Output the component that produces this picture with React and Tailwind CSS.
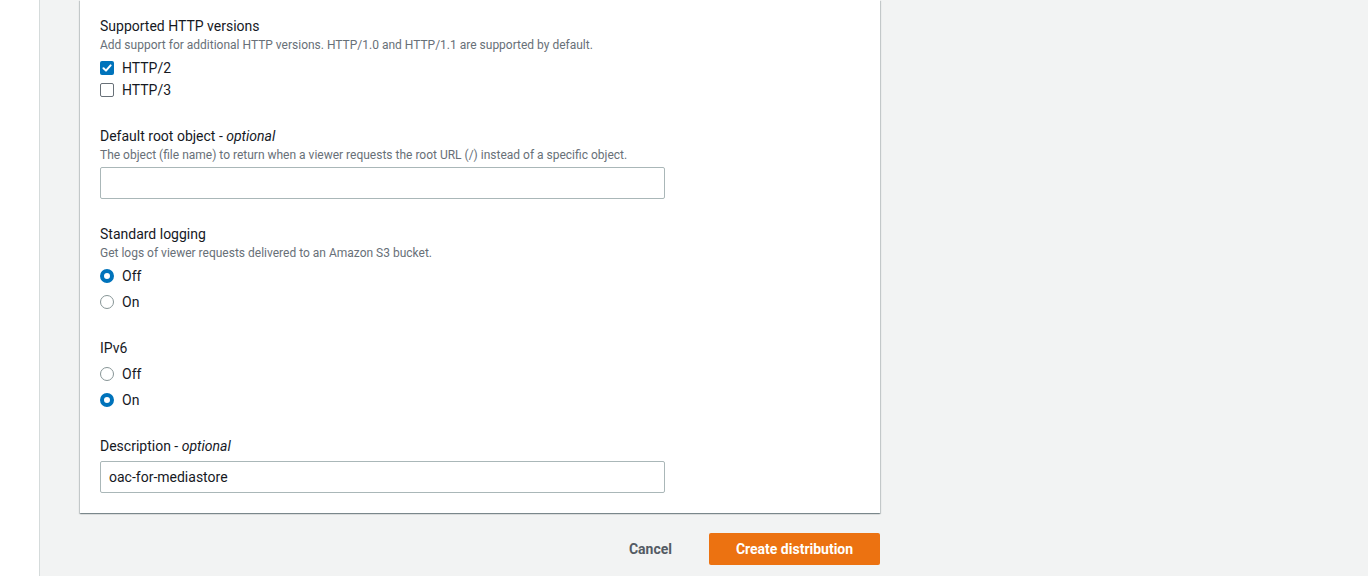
import React from "react";

const font = { fontFamily: "Roboto, 'Liberation Sans', Arial, sans-serif" };

function Checkbox({ checked, label }) {
  return (
    <label className="flex h-[22px] items-center gap-2 text-sm text-[#16191f]">
      {checked ? (
        <span className="flex h-[14px] w-[14px] items-center justify-center rounded-[2px] bg-[#0073bb]">
          <svg width="10" height="10" viewBox="0 0 10 10" fill="none">
            <path d="M1.5 5.2 L4 7.6 L8.6 2.4" stroke="white" strokeWidth="2" strokeLinecap="round" strokeLinejoin="round" />
          </svg>
        </span>
      ) : (
        <span className="h-[14px] w-[14px] rounded-[2px] border border-[#687078] bg-white" />
      )}
      <span className="leading-[22px]">{label}</span>
    </label>
  );
}

function Radio({ checked, label }) {
  return (
    <label className="flex h-[26px] items-center gap-2 text-sm text-[#16191f]">
      {checked ? (
        <span className="h-[14px] w-[14px] rounded-full border-[4px] border-[#0073bb] bg-white" />
      ) : (
        <span className="h-[14px] w-[14px] rounded-full border border-[#879596] bg-white" />
      )}
      <span className="leading-[22px]">{label}</span>
    </label>
  );
}

function Label({ children }) {
  return <div className="text-sm leading-[22px] text-[#16191f]">{children}</div>;
}

function Desc({ children }) {
  return <div className="text-xs leading-4 text-[#687078]">{children}</div>;
}

function Input({ value }) {
  return (
    <div className="mt-1 flex h-8 w-[565px] items-center rounded-[2px] border border-[#aab7b8] bg-white px-2 text-sm text-[#16191f]">
      {value}
    </div>
  );
}

export default function App() {
  return (
    <div className="flex h-[576px] w-[1368px] overflow-hidden bg-[#f2f3f3]" style={font}>
      <div className="h-full w-[40px] shrink-0 border-r border-[#d5dbdb] bg-white" />
      <div className="ml-[40px] flex w-[800px] flex-col">
        <div className="bg-white px-5 pt-[15px] pb-5 shadow-[0_1px_1px_0_rgba(0,28,36,0.3),1px_1px_1px_0_rgba(0,28,36,0.15),-1px_1px_1px_0_rgba(0,28,36,0.15)]">
          <Label>Supported HTTP versions</Label>
          <Desc>Add support for additional HTTP versions. HTTP/1.0 and HTTP/1.1 are supported by default.</Desc>
          <div className="mt-1">
            <Checkbox checked label="HTTP/2" />
            <Checkbox label="HTTP/3" />
          </div>

          <div className="mt-6">
            <Label>
              Default root object - <i>optional</i>
            </Label>
            <Desc>The object (file name) to return when a viewer requests the root URL (/) instead of a specific object.</Desc>
            <Input value="" />
          </div>

          <div className="mt-6">
            <Label>Standard logging</Label>
            <Desc>Get logs of viewer requests delivered to an Amazon S3 bucket.</Desc>
            <div className="mt-0.5">
              <Radio checked label="Off" />
              <Radio label="On" />
            </div>
          </div>

          <div className="mt-[22px]">
            <Label>IPv6</Label>
            <div className="mt-0.5">
              <Radio label="Off" />
              <Radio checked label="On" />
            </div>
          </div>

          <div className="mt-[22px]">
            <Label>
              Description - <i>optional</i>
            </Label>
            <Input value="oac-for-mediastore" />
          </div>
        </div>

        <div className="mt-5 flex items-center justify-end">
          <button className="mr-[17px] h-8 px-5 text-sm font-bold text-[#545b64]">Cancel</button>
          <button className="h-8 w-[171px] rounded-[2px] bg-[#ec7211] text-sm font-bold text-white">
            Create distribution
          </button>
        </div>
      </div>
    </div>
  );
}
